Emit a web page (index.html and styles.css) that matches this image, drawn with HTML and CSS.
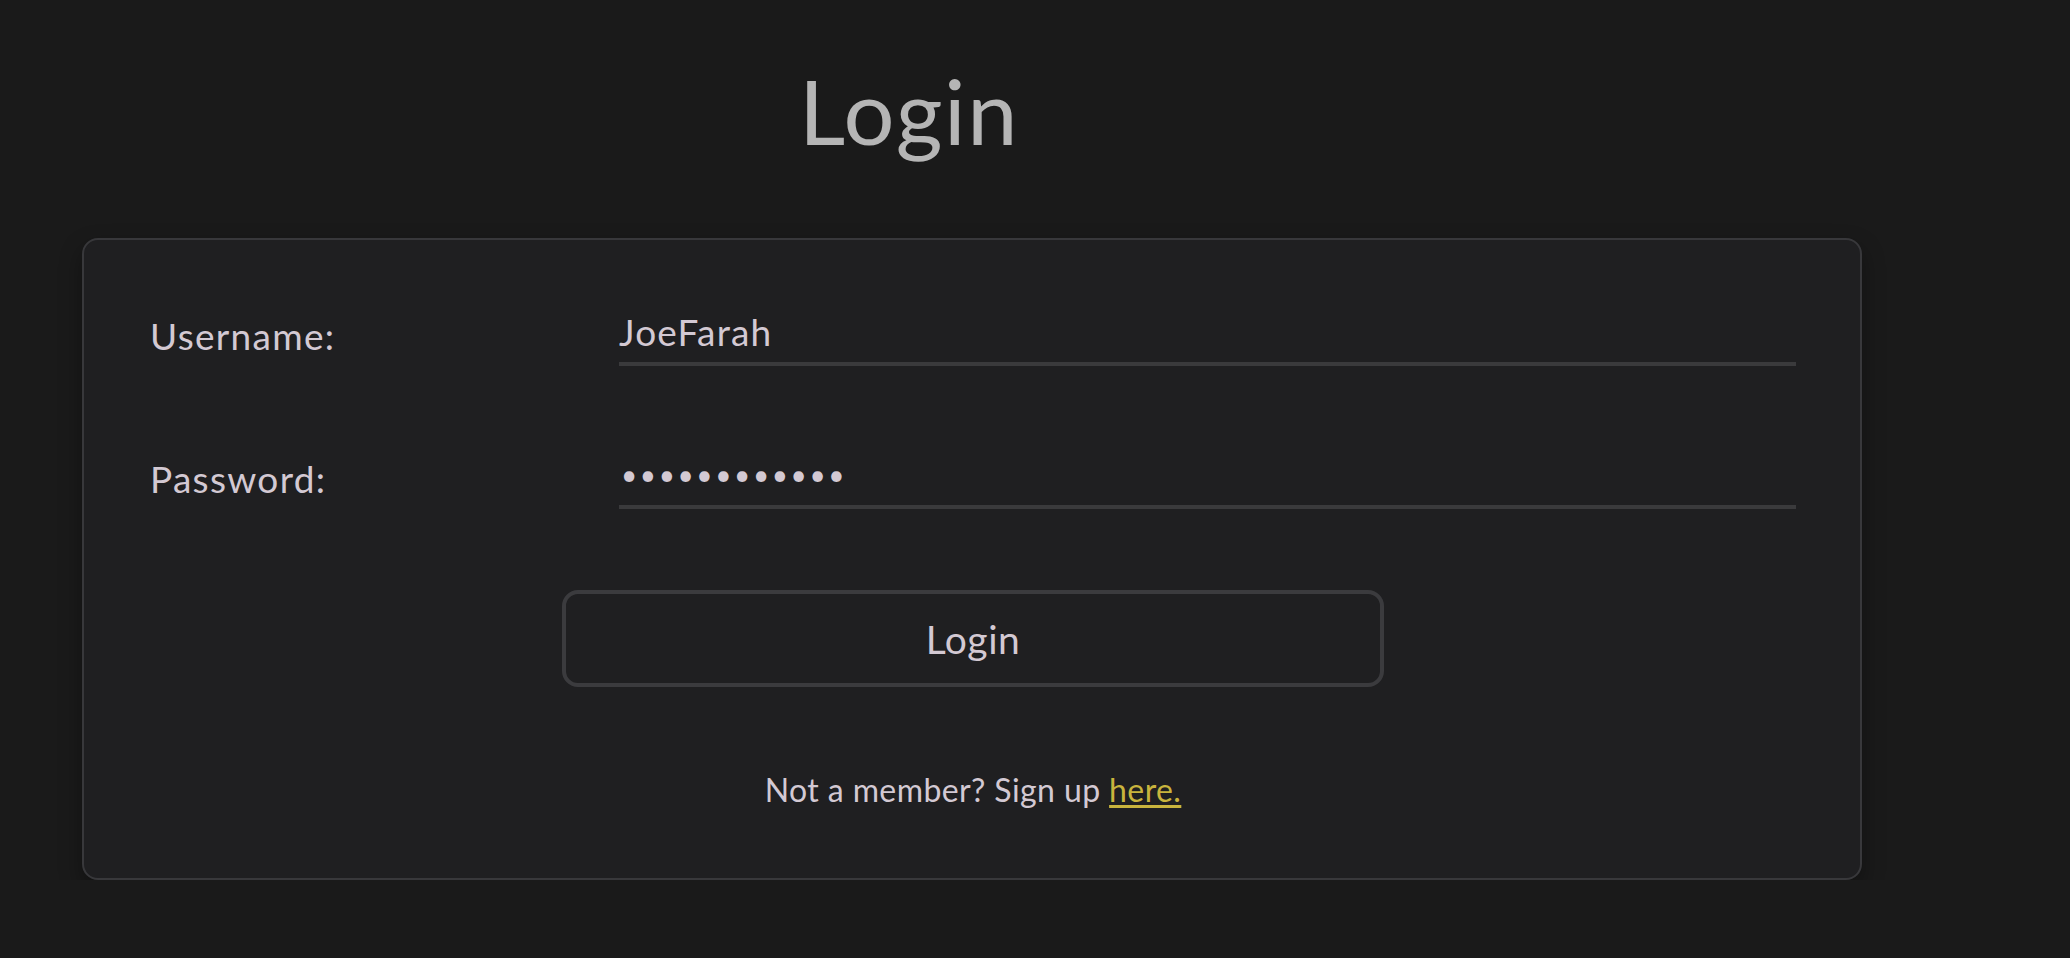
FILE: index.html
```html
<!DOCTYPE html>
<html lang="en">
<head>
<meta charset="utf-8">
<title>Login</title>
<link rel="stylesheet" href="styles.css">
</head>
<body>
<main class="page">
  <h1 class="title">Login</h1>
  <form class="card" onsubmit="return false">
    <div class="fields">
      <label class="label" for="username">Username:</label>
      <input class="field" id="username" type="text" value="JoeFarah">
      <label class="label" for="password">Password:</label>
      <input class="field field-pass" id="password" type="password" value="secretpass12">
    </div>
    <button class="btn" type="submit">Login</button>
    <p class="signup">Not a member? Sign up <a class="link" href="#">here.</a></p>
  </form>
</main>
</body>
</html>
```

FILE: styles.css
```css
html, body {
  margin: 0;
  padding: 0;
  background: #1a1a1a;
}
body {
  font-family: Lato, "Open Sans", sans-serif;
  color: #d3c9d3;
}
.page {
  width: 1780px;
  margin-left: 82px;
  padding-top: 50px;
}
.title {
  margin: 0;
  font-size: 90px;
  font-weight: 400;
  letter-spacing: 1.5px;
  line-height: 120px;
  color: #b5b5b5;
  text-align: center;
  padding-right: 126px;
  height: 188px;
}
.card {
  box-sizing: border-box;
  width: 1780px;
  height: 642px;
  border: 2px solid #38383b;
  border-radius: 16px;
  background: #1f1f21;
  box-shadow: 0 10px 22px rgba(0, 0, 0, 0.35);
  padding: 68px 64px 0 66px;
  display: flex;
  flex-direction: column;
  align-items: center;
}
.fields {
  width: 100%;
  display: grid;
  grid-template-columns: 469px 1fr;
  row-gap: 85px;
}
.label {
  font-size: 37px;
  line-height: 46px;
  letter-spacing: 1.3px;
  padding-top: 5px;
  color: #d3c9d3;
}
.field {
  box-sizing: border-box;
  width: 100%;
  height: 58px;
  margin: 0;
  padding: 0 0 8px 0;
  border: none;
  border-bottom: 4px solid #3a3a3c;
  background: transparent;
  color: #d3c9d3;
  font-family: Lato, "Open Sans", sans-serif;
  font-size: 37px;
  letter-spacing: 1.2px;
  line-height: 46px;
  outline: none;
}
.field-pass {
  font-size: 28px;
  letter-spacing: 2.6px;
  padding-left: 2px;
}
.btn {
  box-sizing: border-box;
  width: 822px;
  height: 97px;
  margin-top: 81px;
  border: 4px solid #3b3b3e;
  border-radius: 16px;
  background: #1f1f21;
  color: #d3c9d3;
  font-family: Lato, "Open Sans", sans-serif;
  font-size: 39px;
  letter-spacing: 0.5px;
  cursor: pointer;
}
.signup {
  margin: 83px 0 0 0;
  font-size: 32px;
  line-height: 40px;
  letter-spacing: 0.4px;
  color: #d3c9d3;
}
.link {
  color: #c9b43d;
  text-decoration: underline;
  text-underline-offset: 3px;
}
```
